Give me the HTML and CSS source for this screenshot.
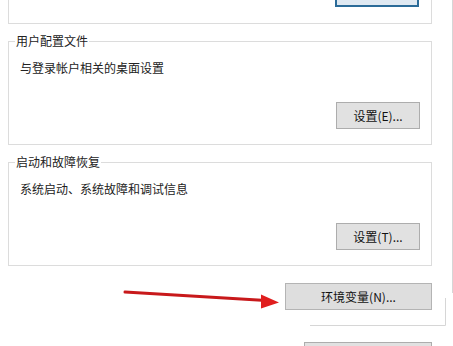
FILE: index.html
```html
<!DOCTYPE html>
<html lang="zh-CN">
<head>
<meta charset="utf-8">
<title>系统属性 - 高级</title>
<link rel="stylesheet" href="styles.css">
</head>
<body>
<div class="page">
  <div class="group-top">
    <button class="btn btn-focus">设置(S)...</button>
  </div>

  <fieldset class="group">
    <legend class="legend">用户配置文件</legend>
    <p class="desc">与登录帐户相关的桌面设置</p>
    <div class="row">
      <button class="btn">设置(E)...</button>
    </div>
  </fieldset>

  <fieldset class="group group-second">
    <legend class="legend">启动和故障恢复</legend>
    <p class="desc">系统启动、系统故障和调试信息</p>
    <div class="row">
      <button class="btn">设置(T)...</button>
    </div>
  </fieldset>

  <div class="row env-row">
    <button class="btn btn-env">环境变量(N)...</button>
  </div>
  <div class="row last-row">
    <div class="btn-last"></div>
  </div>
</div>

<svg class="overlay" width="453" height="346" viewBox="0 0 453 346" aria-hidden="true">
  <path d="M452.5 0 V293" stroke="#d6d6d6" stroke-width="1" fill="none"/>
  <path d="M445.5 298 V325.5 H310" stroke="#d6d6d6" stroke-width="1" fill="none"/>
  <path d="M125 292 L266 300.5" stroke="#c8191b" stroke-width="3" stroke-linecap="round" fill="none"/>
  <polygon points="261,294.5 279,302.5 261,308.5" fill="#e01e1e"/>
</svg>
</body>
</html>
```

FILE: styles.css
```css
html, body {
  margin: 0;
  padding: 0;
  background: #ffffff;
}

body {
  position: relative;
  width: 453px;
  height: 346px;
  overflow: hidden;
  font-family: "Microsoft YaHei", "Noto Sans CJK SC", sans-serif;
  font-size: 12px;
  color: #111;
}

.page {
  padding-left: 8px;
  width: 424px;
}

.group-top {
  box-sizing: border-box;
  width: 424px;
  height: 24px;
  border: 1px solid #dcdcdc;
  border-top: none;
  display: flex;
  justify-content: flex-end;
  align-items: flex-start;
  padding-right: 12px;
}

.btn {
  box-sizing: border-box;
  width: 84px;
  height: 27px;
  margin: 0;
  padding: 0;
  background: #e1e1e1;
  border: 1px solid #adadad;
  font-family: "Microsoft YaHei", "Noto Sans CJK SC", sans-serif;
  font-size: 12px;
  line-height: 16px;
  color: #111;
}

.btn-focus {
  margin-top: -20px;
  height: 27px;
  background: #dfe9f2;
  border: 2px solid #2b6b98;
  padding-bottom: 9px;
}

.group {
  box-sizing: border-box;
  width: 424px;
  margin: 9px 0 0 0;
  padding: 0 11px 15px 6px;
  border: 1px solid #dcdcdc;
}

.group-second {
  margin-top: 9px;
}

.legend {
  padding: 0 1px;
  font-size: 12px;
  line-height: 16px;
  color: #222;
}

.desc {
  margin: 11px 0 0 5px;
  line-height: 16px;
  color: #222;
}

.row {
  display: flex;
  justify-content: flex-end;
  margin-top: 26px;
}

.env-row {
  margin-top: 17px;
}

.btn-env {
  width: 147px;
  height: 27px;
  border-color: #b4b4b4;
  background: #dedede;
}

.last-row {
  margin-top: 32px;
}

.btn-last {
  box-sizing: border-box;
  width: 128px;
  height: 4px;
  background: #e1e1e1;
  border: 1px solid #adadad;
  border-bottom: none;
}

.overlay {
  position: absolute;
  left: 0;
  top: 0;
  pointer-events: none;
}
```
